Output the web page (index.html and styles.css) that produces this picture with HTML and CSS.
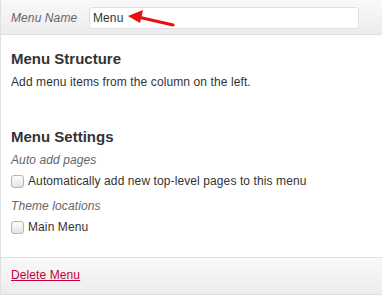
FILE: index.html
```html
<!DOCTYPE html>
<html>
<head>
<meta charset="utf-8">
<link rel="stylesheet" href="styles.css">
</head>
<body>
<div class="menu-edit">
  <div class="menu-header">
    <label class="name-label">Menu Name</label>
    <div class="name-field">
      <span class="name-input">Menu</span>
      <svg class="arrow" width="50" height="20" viewBox="0 0 50 20">
        <line x1="47" y1="16" x2="12" y2="8" stroke="#e8100f" stroke-width="3" stroke-linecap="round"/>
        <polygon points="2,7 17,1 14,14" fill="#e8100f"/>
      </svg>
    </div>
  </div>
  <div class="menu-body">
    <h3 class="heading">Menu Structure</h3>
    <p class="text">Add menu items from the column on the left.</p>
    <h3 class="heading settings">Menu Settings</h3>
    <div class="setting-label">Auto add pages</div>
    <div class="check-row"><span class="checkbox"></span>Automatically add new top-level pages to this menu</div>
    <div class="setting-label second">Theme locations</div>
    <div class="check-row"><span class="checkbox"></span>Main Menu</div>
  </div>
  <div class="menu-footer">
    <a class="delete" href="#">Delete Menu</a>
  </div>
</div>
</body>
</html>
```
FILE: styles.css
```css
html, body {
  margin: 0;
  padding: 0;
  background: #fff;
}
body {
  font-family: "Liberation Sans", Arial, sans-serif;
  color: #333;
  font-size: 12px;
  letter-spacing: 0.1px;
}
.menu-edit {
  border-left: 1px solid #dfdfdf;
  width: 400px;
}
.menu-header {
  border-bottom: 1px solid #dfdfdf;
  background: linear-gradient(#f9f9f9, #ececec);
  display: flex;
  align-items: flex-start;
  padding-top: 7px;
  box-sizing: border-box;
  height: 35px;
}
.name-label {
  font-style: italic;
  color: #666;
  font-size: 12px;
  margin-left: 10px;
  width: 78px;
  line-height: 22px;
}
.name-field {
  position: relative;
  width: 270px;
  height: 22px;
  box-sizing: border-box;
  border: 1px solid #dfdfdf;
  border-radius: 3px;
  background: #fff;
}
.name-input {
  display: block;
  padding-left: 3px;
  line-height: 20px;
  color: #333;
}
.arrow {
  position: absolute;
  left: 36px;
  top: 1px;
}
.menu-body {
  padding: 14px 10px 0 10px;
  height: 222px;
  box-sizing: border-box;
}
.heading {
  margin: 0;
  font-size: 15px;
  line-height: 20px;
  font-weight: bold;
  color: #333;
  letter-spacing: 0;
}
.text {
  margin: 5px 0 0;
  line-height: 16px;
}
.heading.settings {
  margin-top: 37px;
}
.setting-label {
  margin-top: 5px;
  font-style: italic;
  color: #666;
  line-height: 16px;
}
.setting-label.second {
  margin-top: 9px;
}
.check-row {
  margin-top: 5px;
  display: flex;
  align-items: center;
  line-height: 16px;
}
.checkbox {
  width: 13px;
  height: 13px;
  box-sizing: border-box;
  border: 1px solid #b4b4b4;
  border-radius: 3px;
  background: linear-gradient(#fcfcfc, #e4e4e4);
  margin-right: 4px;
}
.menu-footer {
  border-top: 1px solid #dfdfdf;
  border-bottom: 1px solid #dfdfdf;
  background: linear-gradient(#f9f9f9, #ececec);
  padding: 9px 10px 11px;
  line-height: 16px;
}
.delete {
  color: #c4003a;
  text-decoration: underline;
}
```
